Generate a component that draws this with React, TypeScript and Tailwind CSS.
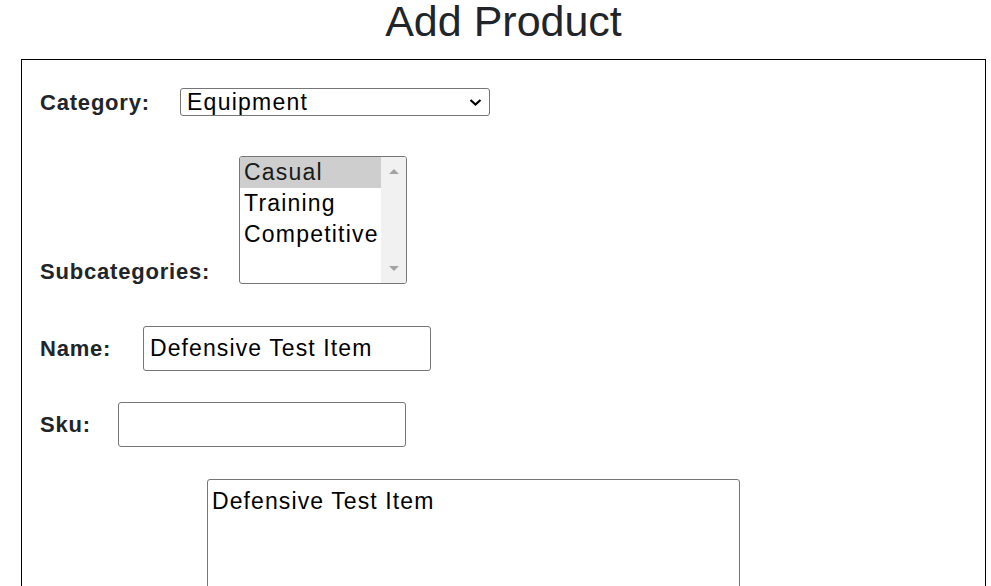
const subcategories = ["Casual", "Training", "Competitive"];

function Label({ children, width }: { children: React.ReactNode; width: string }) {
    return (
        <label className={`${width} shrink-0 text-[22px] leading-[25px] font-bold tracking-[0.8px] text-[#212529] whitespace-nowrap`}>
            {children}
        </label>
    );
}

export default function App() {
    return (
        <div className="min-h-[586px] bg-white pl-[21px] pr-[5px] font-['Liberation_Sans',Arial,sans-serif] text-black">
            <h1 className="text-center text-[43px] leading-none font-normal text-[#212529]">Add Product</h1>
            <form className="mt-[16px] border border-black pl-[18px] pb-10 h-[640px]">
                {/* category */}
                <div className="mt-[28px] flex items-center">
                    <Label width="w-[140px]">Category:</Label>
                    <div className="flex h-[28px] w-[310px] items-center justify-between rounded-[3px] border border-[#767676] pl-[6px] pr-[7px]">
                        <span className="text-[23px] leading-none tracking-[1.25px]">Equipment</span>
                        <svg width="13" height="9" viewBox="0 0 13 9" fill="none">
                            <path d="M1.5 2l5 4.5 5-4.5" stroke="#000" strokeWidth="2.2" />
                        </svg>
                    </div>
                </div>

                {/* subcategories */}
                <div className="mt-[40px] flex items-end">
                    <Label width="w-[199px]">Subcategories:</Label>
                    <div className="flex h-[128px] w-[168px] overflow-hidden rounded-[3px] border border-[#767676]">
                        <div className="flex-1 text-[23px] tracking-[1.2px]">
                            {subcategories.map((s, i) => (
                                <div
                                    key={s}
                                    className={`h-[31px] pl-[4px] leading-[31px] ${i === 0 ? "bg-[#cecece] text-[#1a1a1a]" : ""}`}
                                >
                                    {s}
                                </div>
                            ))}
                        </div>
                        <div className="flex w-[25px] flex-col items-center justify-between bg-[#f1f1f1] py-[12px]">
                            <svg width="10" height="5" viewBox="0 0 10 5">
                                <path d="M0 5L5 0l5 5z" fill="#a3a3a3" />
                            </svg>
                            <svg width="10" height="5" viewBox="0 0 10 5">
                                <path d="M0 0h10L5 5z" fill="#a3a3a3" />
                            </svg>
                        </div>
                    </div>
                </div>

                {/* name */}
                <div className="mt-[42px] flex items-center">
                    <Label width="w-[103px]">Name:</Label>
                    <input
                        className="h-[45px] w-[288px] rounded-[3px] border border-[#767676] px-[6px] text-[23px] tracking-[1.1px] text-black outline-none"
                        defaultValue="Defensive Test Item"
                    />
                </div>

                {/* sku */}
                <div className="mt-[31px] flex items-center">
                    <Label width="w-[78px]">Sku:</Label>
                    <input className="h-[45px] w-[288px] rounded-[3px] border border-[#767676] px-[6px] text-[23px] outline-none" />
                </div>

                {/* description */}
                <div className="mt-[32px] flex items-end">
                    <Label width="w-[167px]">Description:</Label>
                    <textarea
                        className="h-[200px] w-[533px] resize-none rounded-[3px] border border-[#767676] px-[4px] pt-[4px] text-[23px] tracking-[1.1px] outline-none"
                        defaultValue="Defensive Test Item"
                    />
                </div>
            </form>
        </div>
    );
}
